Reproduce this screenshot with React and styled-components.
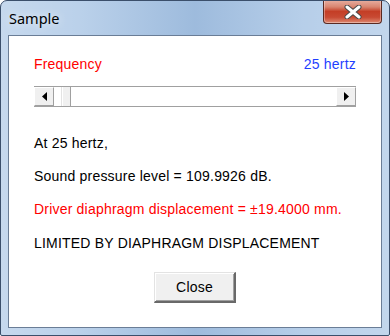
import React from "react";
import styled, { createGlobalStyle } from "styled-components";

const Global = createGlobalStyle`
  html, body {
    margin: 0;
    padding: 0;
    background: #ffffff;
  }
  #root {
    width: 390px;
    height: 336px;
  }
`;

const Window = styled.div`
  box-sizing: border-box;
  width: 390px;
  height: 336px;
  display: flex;
  flex-direction: column;
  border: 1px solid #3b4f6b;
  border-radius: 7px 7px 2px 2px;
  overflow: hidden;
  background: linear-gradient(
      to right,
      rgba(255, 255, 255, 0.25) 0%,
      rgba(255, 255, 255, 0.1) 20%,
      rgba(60, 110, 170, 0.18) 50%,
      rgba(255, 255, 255, 0.05) 78%,
      rgba(255, 255, 255, 0.2) 100%
    ),
    #b3cce8;
`;

const TitleBar = styled.div`
  height: 34px;
  display: flex;
  justify-content: space-between;
  align-items: flex-start;
  flex-shrink: 0;
`;

const Title = styled.div`
  font-family: "Noto Sans", "Open Sans", sans-serif;
  font-size: 14.5px;
  color: #000;
  margin: 7px 0 0 8px;
  text-shadow: 0 0 8px rgba(255, 255, 255, 0.9);
`;

const CloseX = styled.div`
  width: 59px;
  height: 24px;
  margin: -1px 7px 0 0;
  box-sizing: border-box;
  border: 1px solid #5a2a22;
  border-top: none;
  border-radius: 0 0 4px 4px;
  background: linear-gradient(
    to bottom,
    #e8b0a2 0%,
    #d98570 30%,
    #c43e26 50%,
    #c84a33 75%,
    #de8a72 100%
  );
  box-shadow: inset 0 0 0 1px rgba(255, 255, 255, 0.35);
  display: flex;
  align-items: center;
  justify-content: center;
`;

const Client = styled.div`
  flex: 1;
  margin: 0 7px 7px 7px;
  background: #ffffff;
  border: 1px solid #6a7d96;
  display: flex;
  flex-direction: column;
  padding: 20px 25px 0 25px;
  font-family: "Liberation Sans", Arial, sans-serif;
  font-size: 14px;
  letter-spacing: 0.2px;
  color: #000;
`;

const LabelRow = styled.div`
  display: flex;
  justify-content: space-between;
  line-height: 16px;
  height: 16px;
`;

const Label = styled.span`
  color: ${(p) => p.color};
`;

const ScrollBar = styled.div`
  margin-top: 14px;
  height: 21px;
  box-sizing: border-box;
  display: flex;
  border-top: 1px solid #a0a0a0;
  border-bottom: 1px solid #a0a0a0;
  background: #ffffff;
`;

const ArrowButton = styled.div`
  width: 20px;
  box-sizing: border-box;
  background: #f0f0f0;
  border-top: 1px solid #ffffff;
  border-left: 1px solid #ffffff;
  border-right: 1px solid #a0a0a0;
  border-bottom: 1px solid #a0a0a0;
  display: flex;
  align-items: center;
  justify-content: center;
`;

const Track = styled.div`
  flex: 1;
  display: flex;
  padding-left: 8px;
`;

const Thumb = styled.div`
  width: 9px;
  box-sizing: border-box;
  background: #f0f0f0;
  border-left: 1px solid #ffffff;
  border-right: 1px solid #a0a0a0;
  box-shadow: -1px 0 0 #e3e3e3;
`;

const Line = styled.div`
  margin-top: ${(p) => p.gap}px;
  line-height: 16px;
  color: ${(p) => p.color || "#000"};
`;

const ButtonRow = styled.div`
  display: flex;
  justify-content: center;
  margin-top: 21px;
`;

const Button = styled.button`
  width: 82px;
  height: 31px;
  box-sizing: border-box;
  background: #f0f0f0;
  border: none;
  border-top: 1px solid #e3e3e3;
  border-left: 1px solid #e3e3e3;
  border-right: 2px solid #696969;
  border-bottom: 2px solid #696969;
  box-shadow: inset 1px 1px 0 #ffffff, inset -1px -1px 0 #a0a0a0;
  font-family: "Liberation Sans", Arial, sans-serif;
  font-size: 14px;
  letter-spacing: 0.2px;
  color: #000;
  padding: 0;
`;

function Arrow({ dir }) {
  return (
    <svg width="5" height="9" viewBox="0 0 5 9">
      {dir === "left" ? (
        <polygon points="5,0 5,9 0,4.5" fill="#000" />
      ) : (
        <polygon points="0,0 0,9 5,4.5" fill="#000" />
      )}
    </svg>
  );
}

export default function App() {
  return (
    <>
      <Global />
      <Window>
        <TitleBar>
          <Title>Sample</Title>
          <CloseX>
            <svg width="18" height="14" viewBox="0 0 18 14">
              <path
                d="M3 2 L15 12 M15 2 L3 12"
                stroke="#4a4a4a"
                strokeWidth="5"
                strokeLinecap="round"
              />
              <path
                d="M3 2 L15 12 M15 2 L3 12"
                stroke="#ffffff"
                strokeWidth="3"
                strokeLinecap="round"
              />
            </svg>
          </CloseX>
        </TitleBar>
        <Client>
          <LabelRow>
            <Label color="#ff0000">Frequency</Label>
            <Label color="#1f3fff">25 hertz</Label>
          </LabelRow>
          <ScrollBar>
            <ArrowButton>
              <Arrow dir="left" />
            </ArrowButton>
            <Track>
              <Thumb />
            </Track>
            <ArrowButton>
              <Arrow dir="right" />
            </ArrowButton>
          </ScrollBar>
          <Line gap={28}>At 25 hertz,</Line>
          <Line gap={17}>Sound pressure level = 109.9926 dB.</Line>
          <Line gap={17} color="#ff0000">
            Driver diaphragm displacement = ±19.4000 mm.
          </Line>
          <Line gap={18}>LIMITED BY DIAPHRAGM DISPLACEMENT</Line>
          <ButtonRow>
            <Button>Close</Button>
          </ButtonRow>
        </Client>
      </Window>
    </>
  );
}
